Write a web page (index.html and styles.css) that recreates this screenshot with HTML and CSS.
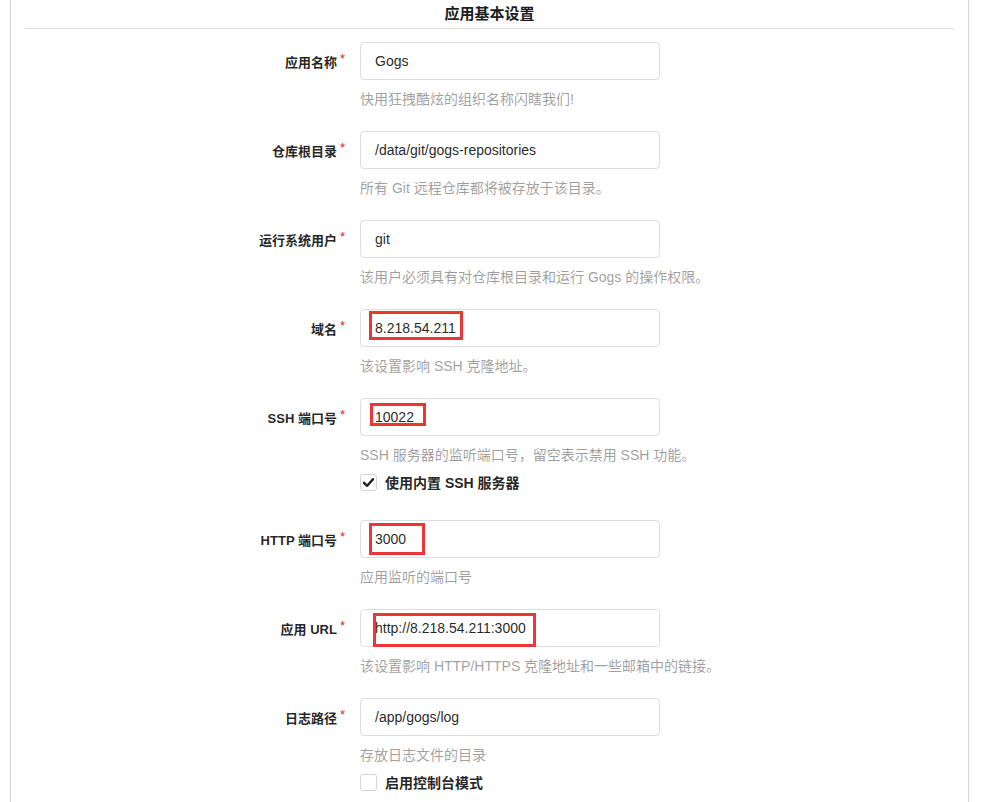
FILE: index.html
```html
<html>
<head>
    <meta charset="utf-8">
    <link rel="stylesheet" href="styles.css">
</head>
<body>
    <div class="segment">
        <h4 class="segment-title">应用基本设置</h4>

        <div class="form">
            <div class="field">
                <div class="row">
                    <label class="required">应用名称</label>
                    <div class="input-box">Gogs</div>
                </div>
                <p class="help">快用狂拽酷炫的组织名称闪瞎我们!</p>
            </div>

            <div class="field">
                <div class="row">
                    <label class="required">仓库根目录</label>
                    <div class="input-box">/data/git/gogs-repositories</div>
                </div>
                <p class="help">所有 Git 远程仓库都将被存放于该目录。</p>
            </div>

            <div class="field">
                <div class="row">
                    <label class="required">运行系统用户</label>
                    <div class="input-box">git</div>
                </div>
                <p class="help">该用户必须具有对仓库根目录和运行 Gogs 的操作权限。</p>
            </div>

            <div class="field">
                <div class="row">
                    <label class="required">域名</label>
                    <div class="input-box">8.218.54.211<span class="mark mark-domain"></span></div>
                </div>
                <p class="help">该设置影响 SSH 克隆地址。</p>
            </div>

            <div class="field">
                <div class="row">
                    <label class="required">SSH 端口号</label>
                    <div class="input-box">10022<span class="mark mark-ssh"></span></div>
                </div>
                <p class="help">SSH 服务器的监听端口号，留空表示禁用 SSH 功能。</p>
                <div class="check">
                    <span class="check-box">
                        <svg width="13" height="13" viewBox="0 0 13 13"><path d="M2 6.8 L5.2 9.8 L11 3.2" fill="none" stroke="#1b1c1d" stroke-width="2.4" stroke-linecap="round" stroke-linejoin="round"/></svg>
                    </span>
                    <span class="check-label">使用内置 SSH 服务器</span>
                </div>
            </div>

            <div class="field">
                <div class="row">
                    <label class="required">HTTP 端口号</label>
                    <div class="input-box">3000<span class="mark mark-http"></span></div>
                </div>
                <p class="help">应用监听的端口号</p>
            </div>

            <div class="field">
                <div class="row">
                    <label class="required">应用 URL</label>
                    <div class="input-box">http://8.218.54.211:3000<span class="mark mark-url"></span></div>
                </div>
                <p class="help">该设置影响 HTTP/HTTPS 克隆地址和一些邮箱中的链接。</p>
            </div>

            <div class="field">
                <div class="row">
                    <label class="required">日志路径</label>
                    <div class="input-box">/app/gogs/log</div>
                </div>
                <p class="help">存放日志文件的目录</p>
                <div class="check">
                    <span class="check-box"></span>
                    <span class="check-label">启用控制台模式</span>
                </div>
            </div>
        </div>
    </div>
</body>
</html>
```

FILE: styles.css
```css
:root {
    --def-fg: rgba(0, 0, 0, 0.87);
    --def-muted: rgba(0, 0, 0, 0.4);
    --def-line: #d4d4d5;
    --def-red: #db2828;
    --def-fn: "Liberation Sans", "Noto Sans CJK SC", sans-serif;
}

* {
    box-sizing: border-box;
    margin: 0px;
    padding: 0px;
    font-family: var(--def-fn);
}

body {
    background-color: #fff;
    color: var(--def-fg);
    overflow: hidden;
}

.segment {
    width: 959px;
    min-height: 802px;
    margin-left: 10px;

    border-left: 1px solid var(--def-line);
    border-right: 1px solid var(--def-line);
    background-color: #fff;

    padding: 0 14px;
}

.segment-title {
    height: 29px;
    line-height: 28px;
    text-align: center;
    font-size: 15px;
    font-weight: bold;
    color: #1b1c1d;

    border-bottom: 1px solid #dcdcdd;
}

.form {
    padding-top: 13px;
}

.field {
    margin-bottom: 22px;
}

.row {
    display: flex;
    align-items: center;
    gap: 15px;
}

.row > label {
    width: 320px;
    text-align: right;
    font-size: 13px;
    font-weight: bold;
    color: var(--def-fg);
}

.required::after {
    content: "*";
    color: var(--def-red);
    font-weight: normal;
    margin-left: 3px;
    position: relative;
    top: -4px;
}

.input-box {
    position: relative;
    width: 300px;
    height: 38px;
    line-height: 36px;

    border: 1px solid rgba(34, 36, 38, 0.15);
    border-radius: 4px;

    padding: 0 14px;
    font-size: 14px;
    color: var(--def-fg);
}

.help {
    margin-top: 9px;
    margin-left: 335px;
    line-height: 20px;
    font-size: 14px;
    color: var(--def-muted);
}

.check {
    display: flex;
    align-items: center;
    height: 26px;
    margin-top: 7px;
    padding-bottom: 6px;
    margin-left: 335px;
}

.check-box {
    display: flex;
    align-items: center;
    justify-content: center;
    width: 17px;
    height: 17px;

    border: 1px solid var(--def-line);
    border-radius: 3px;
    background-color: #fff;
}

.check-label {
    margin-left: 8px;
    font-size: 14px;
    font-weight: bold;
    color: var(--def-fg);
}

/* red boxes drawn over the screenshot */
.mark {
    position: absolute;
    border: 3px solid #ee3535;
}

.mark-domain {
    left: 8px;
    top: 1px;
    width: 94px;
    height: 29px;
}

.mark-ssh {
    left: 9px;
    top: 4px;
    width: 56px;
    height: 23px;
}

.mark-http {
    left: 8px;
    top: 2px;
    width: 56px;
    height: 32px;
}

.mark-url {
    left: 12px;
    top: 3px;
    width: 163px;
    height: 34px;
}
```
